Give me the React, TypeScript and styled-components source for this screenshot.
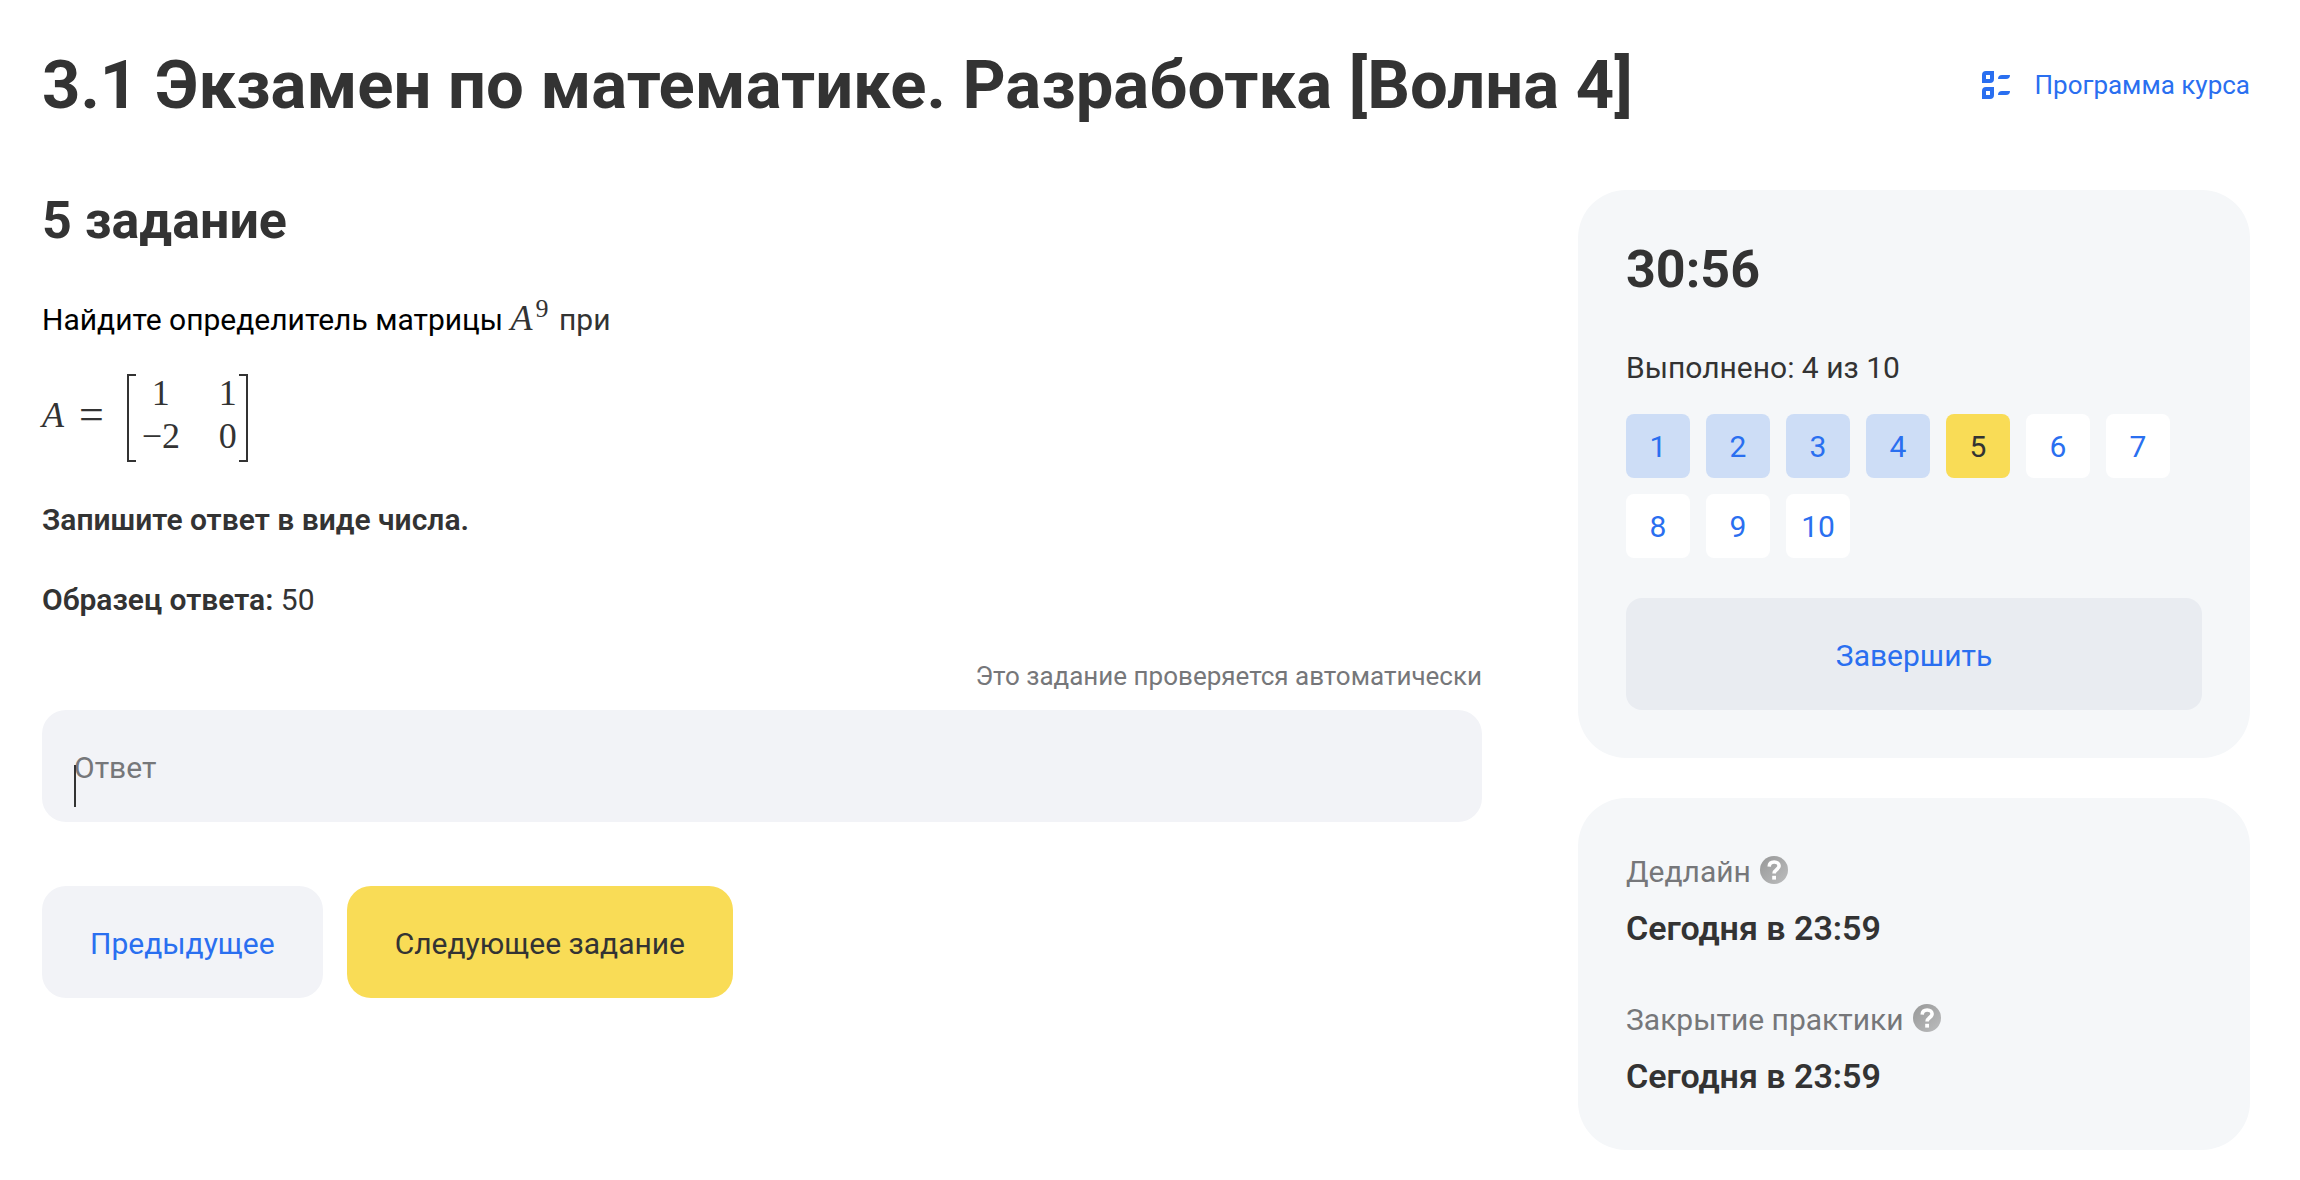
import React, { useState } from "react";
import styled, { createGlobalStyle, css } from "styled-components";

const color = {
  text: "#333333",
  strong: "#000000",
  muted: "#76777a",
  link: "#2a6ff0",
  accent: "#f9dc56",
  neutral: "#f2f3f7",
  neutralDark: "#e9ecf1",
  card: "#f5f7f9",
  done: "#cdddf6",
};

const GlobalStyle = createGlobalStyle`
  *, *::before, *::after { box-sizing: border-box; }
  body {
    margin: 0;
    background: #ffffff;
    color: ${color.text};
    font: 400 30px/48px Roboto, "Liberation Sans", sans-serif;
  }
  h1, h2, p, ol, dl, dd { margin: 0; padding: 0; }
  button, input { font: inherit; color: inherit; }
`;

const Page = styled.div`
  padding: 45px 50px 30px 42px;
`;

const Header = styled.header`
  display: flex;
  align-items: center;
  justify-content: space-between;
  gap: 48px;
  margin-bottom: 65px;
`;

const Title = styled.h1`
  font-size: 67px;
  line-height: 80px;
  font-weight: 700;
`;

const ProgramLink = styled.a`
  display: flex;
  align-items: center;
  flex-shrink: 0;
  gap: 24px;
  color: ${color.link};
  font-size: 26px;
  line-height: 40px;
  text-decoration: none;
`;

const Columns = styled.div`
  display: grid;
  grid-template-columns: minmax(0, 1fr) 672px;
  gap: 96px;
  align-items: start;
`;

const TaskTitle = styled.h2`
  font-size: 52px;
  line-height: 62px;
  font-weight: 700;
  margin-bottom: 44px;
`;

const Paragraph = styled.p`
  & + & { margin-top: 32px; }
`;

const Prompt = styled.span`
  color: ${color.strong};
`;

const Medium = styled.strong`
  font-weight: 600;
`;

const mathFont = css`
  font-family: "Liberation Serif", "Times New Roman", serif;
  font-size: 36px;
`;

const InlineMath = styled.span`
  ${mathFont}
  line-height: 0;
  margin-right: 3px;

  sup {
    font-size: 26px;
    margin-left: 3px;
    vertical-align: 13px;
  }
`;

const Equation = styled.div`
  ${mathFont}
  display: flex;
  align-items: center;
  margin: 30px 0 34px;
`;

const Lead = styled.span`
  display: flex;
  align-items: center;
  gap: 15px;
  padding-bottom: 6px;
  margin-right: 23px;
`;

const Relation = styled.span`
  font-size: 44px;
`;

const Matrix = styled.div`
  display: grid;
  grid-template-columns: 46px 18px;
  align-content: start;
  column-gap: 35px;
  row-gap: 5px;
  height: 88px;
  padding: 0 11px;
  position: relative;
  line-height: 38px;
  text-align: center;

  &::before, &::after {
    content: "";
    position: absolute;
    top: 0;
    bottom: 0;
    width: 9px;
    border: 2px solid ${color.text};
  }
  &::before { left: 0; border-right: 0; }
  &::after { right: 0; border-left: 0; }
`;

const Hint = styled.p`
  margin: 32px 0 14px;
  color: ${color.muted};
  font-size: 26px;
  line-height: 40px;
  text-align: right;
`;

const Field = styled.div`
  position: relative;
`;

const FieldLabel = styled.label`
  position: absolute;
  left: 32px;
  top: 34px;
  color: ${color.muted};
  pointer-events: none;
`;

const Caret = styled.span`
  position: absolute;
  left: 32px;
  top: 55px;
  width: 2px;
  height: 42px;
  background: ${color.text};
`;

const AnswerInput = styled.input`
  display: block;
  width: 100%;
  height: 112px;
  padding: 40px 32px 0;
  border: 0;
  border-radius: 24px;
  outline: 0;
  background: ${color.neutral};
`;

const Actions = styled.div`
  display: flex;
  gap: 24px;
  margin-top: 64px;
`;

type Tone = "neutral" | "accent" | "dark";

const tones: Record<Tone, ReturnType<typeof css>> = {
  neutral: css`background: ${color.neutral}; color: ${color.link};`,
  accent: css`background: ${color.accent}; color: ${color.text};`,
  dark: css`background: ${color.neutralDark}; color: ${color.link}; border-radius: 16px;`,
};

const Button = styled.button<{ $tone: Tone }>`
  height: 112px;
  padding: 4px 48px 0;
  border: 0;
  border-radius: 24px;
  cursor: pointer;
  ${({ $tone }) => tones[$tone]}
`;

const Sidebar = styled.aside`
  display: grid;
  gap: 40px;
`;

const Card = styled.section`
  display: grid;
  padding: 48px;
  border-radius: 48px;
  background: ${color.card};
`;

const DatesCard = styled(Card)`
  padding-bottom: 44px;
`;

const Timer = styled.div`
  font-size: 52px;
  line-height: 64px;
  font-weight: 700;
  margin-bottom: 42px;
`;

const Tiles = styled.ol`
  display: flex;
  flex-wrap: wrap;
  gap: 16px;
  margin: 22px 0 40px;
  list-style: none;
`;

type TileState = "done" | "current" | "todo";

const tileStates: Record<TileState, ReturnType<typeof css>> = {
  done: css`background: ${color.done}; color: ${color.link};`,
  current: css`background: ${color.accent}; color: ${color.text};`,
  todo: css`background: #ffffff; color: ${color.link};`,
};

const Tile = styled.button<{ $state: TileState }>`
  display: block;
  width: 64px;
  height: 64px;
  padding: 2px 0 0;
  border: 0;
  border-radius: 8px;
  cursor: pointer;
  ${({ $state }) => tileStates[$state]}
`;

const Dates = styled.dl`
  display: grid;
  gap: 36px;
`;

const DateLabel = styled.dt`
  display: flex;
  align-items: flex-start;
  gap: 9px;
  color: ${color.muted};
  line-height: 52px;
`;

const DateValue = styled.dd`
  font-size: 34px;
  line-height: 60px;
  font-weight: 600;
`;

const HelpButton = styled.button`
  display: flex;
  margin-top: 10px;
  padding: 0;
  border: 0;
  background: none;
  cursor: pointer;
`;

const ListIcon = () => (
  <svg width="28" height="28" viewBox="0 0 28 28" fill="currentColor" fillRule="evenodd" aria-hidden="true">
    <path d="M4 0h8v8a4 4 0 0 1-4 4H0V4a4 4 0 0 1 4-4zM4 4v4h4V4z" />
    <path d="M4 16h8v8a4 4 0 0 1-4 4H0v-8a4 4 0 0 1 4-4zM4 20v4h4v-4z" />
    <path d="M20 4h8a4 4 0 0 1-4 4h-8a4 4 0 0 1 4-4z" />
    <path d="M20 20h8a4 4 0 0 1-4 4h-8a4 4 0 0 1 4-4z" />
  </svg>
);

const HelpIcon = ({ id }: { id: string }) => (
  <svg width="28" height="28" viewBox="0 0 28 28" aria-hidden="true">
    <defs>
      <linearGradient id={id} x1="0" y1="0" x2="1" y2="1">
        <stop offset="0" stopColor="#979898" />
        <stop offset="1" stopColor="#bcbdbe" />
      </linearGradient>
    </defs>
    <circle cx="14" cy="14" r="14" fill={`url(#${id})`} />
    <path
      d="M9.2 10.6C9.3 7.6 11.3 6 14.2 6c3 0 4.9 1.7 4.9 4.1 0 3.5-5 3.3-5 7.5"
      fill="none"
      stroke="#ffffff"
      strokeWidth="3.6"
    />
    <rect x="12.2" y="19.8" width="3.8" height="3.8" fill="#ffffff" />
  </svg>
);

const TOTAL = 10;
const COMPLETED = 4;
const CURRENT = 5;

const stateOf = (n: number): TileState =>
  n === CURRENT ? "current" : n <= COMPLETED ? "done" : "todo";

const matrix = ["1", "1", "−2", "0"];

const dates = [
  { id: "deadline", label: "Дедлайн", value: "Сегодня в 23:59" },
  { id: "closing", label: "Закрытие практики", value: "Сегодня в 23:59" },
];

export default function App() {
  const [answer, setAnswer] = useState("");

  return (
    <>
      <GlobalStyle />
      <Page>
        <Header>
          <Title>3.1 Экзамен по математике. Разработка [Волна 4]</Title>
          <ProgramLink href="#program">
            <ListIcon />
            Программа курса
          </ProgramLink>
        </Header>

        <Columns>
          <main>
            <TaskTitle>5 задание</TaskTitle>
            <Paragraph>
              <Prompt>Найдите определитель матрицы</Prompt>{" "}
              <InlineMath><i>A</i><sup>9</sup></InlineMath> при
            </Paragraph>
            <Equation>
              <Lead><i>A</i><Relation>=</Relation></Lead>
              <Matrix>
                {matrix.map((cell, i) => <span key={i}>{cell}</span>)}
              </Matrix>
            </Equation>
            <Paragraph><Medium>Запишите ответ в виде числа.</Medium></Paragraph>
            <Paragraph><Medium>Образец ответа:</Medium> 50</Paragraph>

            <Hint>Это задание проверяется автоматически</Hint>
            <Field>
              <AnswerInput
                id="answer"
                type="text"
                autoComplete="off"
                value={answer}
                onChange={(e) => setAnswer(e.target.value)}
              />
              {answer === "" && <FieldLabel htmlFor="answer">Ответ</FieldLabel>}
              {answer === "" && <Caret />}
            </Field>

            <Actions>
              <Button type="button" $tone="neutral">Предыдущее</Button>
              <Button type="button" $tone="accent">Следующее задание</Button>
            </Actions>
          </main>

          <Sidebar>
            <Card>
              <Timer role="timer">30:56</Timer>
              <p>Выполнено: {COMPLETED} из {TOTAL}</p>
              <Tiles>
                {Array.from({ length: TOTAL }, (_, i) => i + 1).map((n) => (
                  <li key={n}>
                    <Tile type="button" $state={stateOf(n)}>{n}</Tile>
                  </li>
                ))}
              </Tiles>
              <Button type="button" $tone="dark">Завершить</Button>
            </Card>

            <DatesCard>
              <Dates>
                {dates.map(({ id, label, value }) => (
                  <div key={id}>
                    <DateLabel>
                      {label}
                      <HelpButton type="button" aria-label={label}>
                        <HelpIcon id={id} />
                      </HelpButton>
                    </DateLabel>
                    <DateValue>{value}</DateValue>
                  </div>
                ))}
              </Dates>
            </DatesCard>
          </Sidebar>
        </Columns>
      </Page>
    </>
  );
}
